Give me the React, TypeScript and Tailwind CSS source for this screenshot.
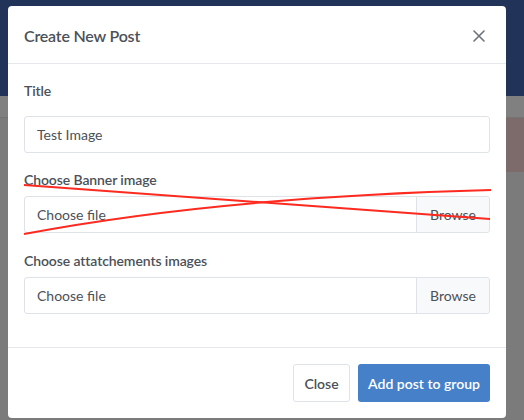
import React from "react";

export default function App() {
  return (
    <div className="relative w-[524px] h-[420px] overflow-hidden bg-[#7b7b7b] font-['Lato',sans-serif]">
      {/* dimmed page background */}
      <div className="flex flex-col">
        <div className="h-[96px] bg-[#22335a]" />
        <div className="h-[22px] bg-[#808080] border-b border-[#747474]" />
        <div className="flex justify-end">
          <div className="w-[19px] h-[54px] bg-[#7d6b6b]" />
        </div>
      </div>

      {/* modal */}
      <div className="absolute left-[8px] top-[6px] w-[498px] bg-white rounded-[4px] flex flex-col">
        <div className="h-[58px] px-4 flex items-center justify-between border-b border-[#e5e7eb]">
          <h2 className="text-[16px] tracking-[-0.2px] font-semibold text-[#4b5158] leading-none pt-[2px]">Create New Post</h2>
          <svg width="12" height="12" viewBox="0 0 12 12" className="mr-[5px] mt-[2px]">
            <path d="M1 1 L11 11 M11 1 L1 11" stroke="#6c7279" strokeWidth="1.6" strokeLinecap="round" />
          </svg>
        </div>

        <div className="p-4 flex flex-col">
          <label className="text-[14px] tracking-[-0.1px] font-semibold text-[#4b5158] leading-[21px]">Title</label>
          <div className="mt-[15px] h-[37px] border border-[#dfe3e8] rounded-[3px] px-3 flex items-center text-[14px] text-[#4b5158]">
            Test Image
          </div>

          <label className="mt-[16px] text-[14px] tracking-[-0.1px] font-semibold text-[#4b5158] leading-[21px]">Choose Banner image</label>
          <div className="mt-[6px] h-[37px] border border-[#dfe3e8] rounded-[3px] flex text-[14px] text-[#4b5158]">
            <div className="flex-1 px-3 flex items-center">Choose file</div>
            <div className="w-[73px] border-l border-[#dfe3e8] bg-[#f8f9fa] flex items-center justify-center rounded-r-[3px]">Browse</div>
          </div>

          <label className="mt-[17px] text-[14px] tracking-[-0.1px] font-semibold text-[#4b5158] leading-[21px]">Choose attatchements images</label>
          <div className="mt-[6px] h-[37px] border border-[#dfe3e8] rounded-[3px] flex text-[14px] text-[#4b5158]">
            <div className="flex-1 px-3 flex items-center">Choose file</div>
            <div className="w-[73px] border-l border-[#dfe3e8] bg-[#f8f9fa] flex items-center justify-center rounded-r-[3px]">Browse</div>
          </div>
          <div className="h-[17px]" />
        </div>

        <div className="border-t border-[#e5e7eb] p-4 flex justify-end gap-2">
          <button className="h-[38px] w-[57px] border border-[#dfe3e8] rounded-[3px] bg-white text-[14px] font-semibold text-[#4b5158]">Close</button>
          <button className="h-[38px] w-[132px] rounded-[3px] bg-[#4680c9] text-[14px] font-semibold text-white">Add post to group</button>
        </div>
      </div>

      {/* red strike-through drawing */}
      <svg className="absolute left-0 top-0 pointer-events-none" width="524" height="420">
        <path d="M24 185 L490 219" stroke="#ff2a1f" strokeWidth="2" fill="none" />
        <path d="M24 234 Q220 197 491 190" stroke="#ff2a1f" strokeWidth="2" fill="none" />
      </svg>
    </div>
  );
}
